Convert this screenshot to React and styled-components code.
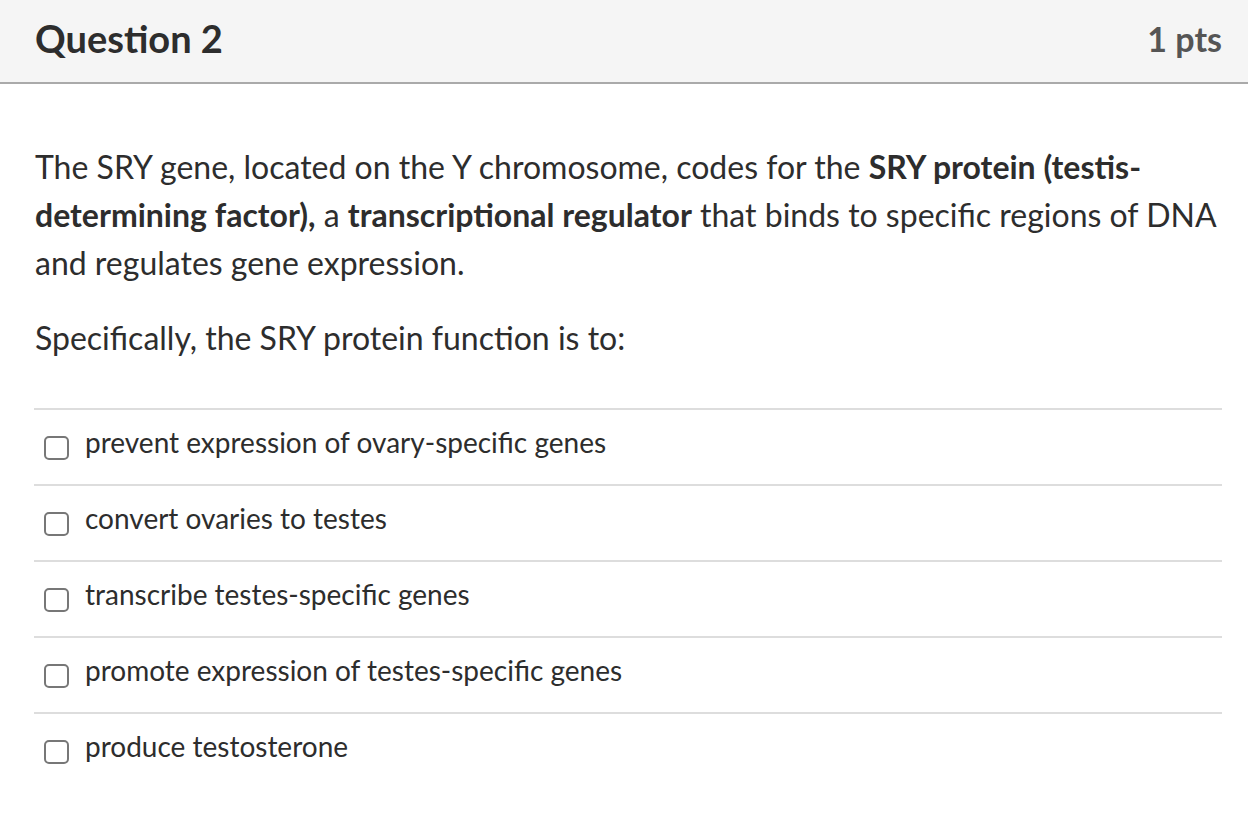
import React from 'react';
import styled, { createGlobalStyle } from 'styled-components';

const GlobalStyle = createGlobalStyle`
body {
  margin: 0;
  background: #ffffff;
  font-family: Lato, "Noto Sans", sans-serif;
  color: #2d2d2d;
}
`

const Wrapper = styled.div`
width: 100%;
min-height: 826px;
background: #ffffff;
`
const Header = styled.div`
height: 76px;
display: flex;
align-items: center;
justify-content: space-between;
padding: 0 26px 6px 35px;
background: #f5f5f5;
border-bottom: 2px solid #aaaaaa;
`
const Title = styled.h2`
margin: 0;
font-size: 38px;
font-weight: 700;
color: #2d2d2d;
`
const Points = styled.div`
font-size: 34px;
font-weight: 700;
color: #555555;
`
const Body = styled.div`
padding: 59px 26px 0 34px;
`
const Text = styled.div`
padding-left: 1px;
margin-right: -8px;
`
const P = styled.p`
margin: 0 0 27px;
font-size: 32px;
line-height: 48px;
&:last-child {
  margin-bottom: 0;
}
`
const Answers = styled.div`
margin-top: 46px;
`
const Row = styled.label`
display: flex;
align-items: flex-start;
gap: 16px;
padding: 14px 0 24px 10px;
border-top: 2px solid #dddddd;
`
const Box = styled.span`
flex: none;
width: 21px;
height: 20px;
margin-top: 12px;
border: 2px solid #777777;
border-radius: 5px;
background: #ffffff;
`
const Label = styled.span`
font-size: 28px;
line-height: 36px;
`

const answers = [
    'prevent expression of ovary-specific genes',
    'convert ovaries to testes',
    'transcribe testes-specific genes',
    'promote expression of testes-specific genes',
    'produce testosterone',
]

export default function App() {
    return (
        <Wrapper>
            <GlobalStyle />
            <Header>
                <Title>Question 2</Title>
                <Points>1 pts</Points>
            </Header>
            <Body>
                <Text>
                    <P>
                        The SRY gene, located on the Y chromosome, codes for the <b>SRY protein (testis-determining factor),</b> a <b>transcriptional regulator</b> that binds to specific regions of DNA and regulates gene expression.
                    </P>
                    <P>Specifically, the SRY protein function is to:</P>
                </Text>
                <Answers>
                    {answers.map((a) => (
                        <Row key={a}>
                            <Box />
                            <Label>{a}</Label>
                        </Row>
                    ))}
                </Answers>
            </Body>
        </Wrapper>
    )
}
